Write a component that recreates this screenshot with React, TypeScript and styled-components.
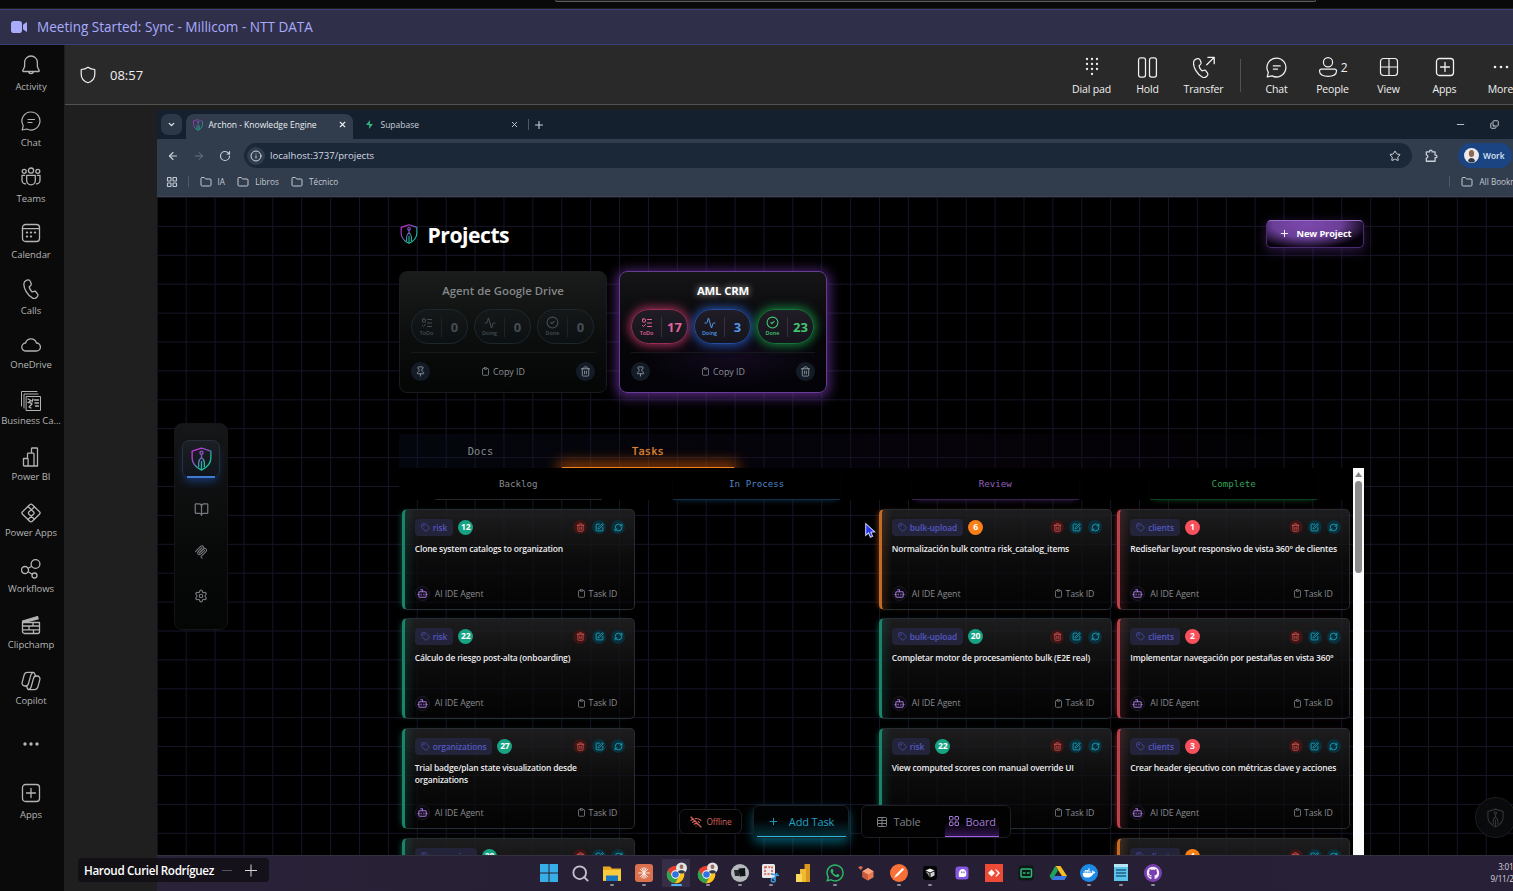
import React from "react";
import styled, { createGlobalStyle, css } from "styled-components";
import {
  Activity, ArrowLeft, ArrowRight, BookOpen, Bot, ChevronDown, CircleCheck, Clipboard, Copy,
  Folder, Info, LayoutGrid, ListTodo, Minus, Pin, Plus, RefreshCw, RotateCw,
  Search, Settings, SquarePen, Star, Table, Tag, Trash2, WifiOff, X,
} from "lucide-react";
import { FaDocker, FaGithub, FaWhatsapp } from "react-icons/fa";

const GlobalStyle = createGlobalStyle`
  * { box-sizing: border-box; }
  html, body { margin: 0; padding: 0; background: #0a0a0a; overflow: hidden; }
  body { font-family: "Open Sans", "Noto Sans", sans-serif; color: #fff; }
  svg { display: block; flex: none; }
`;

/* ---------- shell ---------- */
const Shell = styled.div`
  width: 1513px;
  height: 891px;
  overflow: hidden;
  display: flex;
  flex-direction: column;
  background: #0a0a0a;
`;
const TopStrip = styled.div`
  height: 9px;
  flex: none;
  background: #090909;
  border-bottom: 1px solid #1f1f1f;
`;
const SearchEdge = styled.div`
  width: 761px;
  height: 2px;
  margin-left: 555px;
  border: 1px solid #5c5c5c;
  border-top: 0;
  border-radius: 0 0 4px 4px;
  background: #1c1c1c;
`;
const Banner = styled.div`
  height: 36px;
  flex: none;
  display: flex;
  align-items: center;
  gap: 10px;
  padding-left: 11px;
  background: #2f2f4a;
  border: solid #3d3e78;
  border-width: 1px 0;
  color: #a9acfa;
  font-size: 13.55px;
`;
const Body = styled.div`
  flex: 1;
  min-height: 0;
  display: flex;
`;

/* ---------- left rail ---------- */
const Rail = styled.nav`
  width: 64px;
  flex: none;
  background: #0a0a0a;
  display: flex;
  flex-direction: column;
`;
const RailItem = styled.div<{ $tight?: boolean; $drop?: number }>`
  width: 62px;
  height: 56px;
  flex: none;
  padding-top: ${(p) => 10 + (p.$drop ?? 0)}px;
  display: flex;
  flex-direction: column;
  align-items: center;
  gap: ${(p) => (p.$tight ? 3 : 5)}px;
  color: #b4b4b4;
  font-size: 9.5px;
  line-height: 14px;
  letter-spacing: -0.05px;
  white-space: nowrap;
`;

/* ---------- meeting header ---------- */
const Main = styled.div`
  flex: 1;
  min-width: 0;
  display: flex;
  flex-direction: column;
  border-left: 1px solid #1f1f1f;
  background: #1f1f1f;
  overflow: hidden;
`;
const CallBar = styled.div`
  height: 60px;
  flex: none;
  display: flex;
  align-items: center;
  background: #292929;
  border-bottom: 1px solid #525252;
  padding-left: 14px;
`;
const Timer = styled.div`
  display: flex;
  align-items: center;
  gap: 13px;
  padding-top: 1px;
  font-size: 13px;
  color: #f0f0f0;
`;
const Tools = styled.div`
  display: flex;
  align-items: center;
  margin-left: auto;
  margin-right: -15.5px;
`;
const Tool = styled.div`
  width: 56px;
  padding-top: 4px;
  display: flex;
  flex-direction: column;
  align-items: center;
  gap: 4px;
  font-size: 10.5px;
  line-height: 15px;
  letter-spacing: -0.15px;
  color: #f0f0f0;
  white-space: nowrap;
`;
const ToolIcon = styled.div`
  height: 22px;
  display: flex;
  align-items: center;
  gap: 3px;
  font-size: 12px;
`;
const ToolDivider = styled.div`
  width: 1px;
  height: 33px;
  margin: 2px 8px 0;
  background: #525252;
`;

/* ---------- shared screen ---------- */
const Stage = styled.div`
  flex: 1;
  min-height: 0;
  padding: 5px 0 0 92px;
  position: relative;
`;
const Shared = styled.div`
  width: 1356px;
  height: 781px;
  overflow: hidden;
  display: flex;
  flex-direction: column;
`;
const TabStrip = styled.div`
  height: 29px;
  flex: none;
  display: flex;
  align-items: center;
  background: #15202f;
  padding: 0 14px 0 4px;
  font-size: 8.5px;
  color: #c7ced8;
`;
const TabMenu = styled.div`
  width: 21px;
  height: 21px;
  border-radius: 7px;
  background: #2c3848;
  display: grid;
  place-items: center;
`;
const BrowserTab = styled.div<{ $active?: boolean }>`
  width: ${(p) => (p.$active ? 167 : 172)}px;
  height: 25px;
  align-self: flex-end;
  display: flex;
  align-items: center;
  gap: 6px;
  padding: 0 6.5px 4px ${(p) => (p.$active ? 6.5 : 10.5)}px;
  margin-left: ${(p) => (p.$active ? 4 : 0)}px;
  border-radius: 8px 8px 0 0;
  white-space: nowrap;
  ${(p) => p.$active && css`
    background: #313c4c;
    color: #eceff3;
  `}
`;
const PushRight = styled.div<{ $gap?: number }>`
  margin-left: auto;
  display: flex;
  align-items: center;
  gap: ${(p) => p.$gap ?? 0}px;
`;
const Separator = styled.div<{ $h?: number; $mx?: number }>`
  width: 1px;
  height: ${(p) => p.$h ?? 11}px;
  margin: 0 ${(p) => p.$mx ?? 6}px;
  background: #4d5968;
`;
const NewTab = styled.div`
  margin-left: 1px;
`;
const AddressRow = styled.div`
  height: 33px;
  flex: none;
  display: flex;
  align-items: center;
  background: #313c4c;
  padding-left: 10px;
  color: #c9d0d9;
`;
const NavIcons = styled.div`
  width: 77px;
  display: flex;
  gap: 14px;
`;
const Omnibox = styled.div`
  width: 1168px;
  height: 25px;
  border-radius: 13px;
  background: #1b2838;
  display: flex;
  align-items: center;
  gap: 5px;
  padding: 0 11px 0 3px;
  font-size: 9.6px;
  color: #d5dae1;
`;
const InfoDot = styled.div`
  width: 18px;
  height: 18px;
  border-radius: 50%;
  background: #313c4c;
  display: grid;
  place-items: center;
`;
const ExtensionArea = styled.div`
  width: 46px;
  flex: none;
  padding-left: 12px;
  display: flex;
  align-items: center;
`;
const Profile = styled.div`
  height: 25px;
  width: 54px;
  flex: none;
  border-radius: 13px;
  background: #1b4582;
  display: flex;
  align-items: center;
  gap: 4px;
  padding-left: 6px;
  font-size: 8.4px;
  font-weight: 600;
  color: #dbe6f7;
`;
const Bookmarks = styled.div`
  height: 25px;
  flex: none;
  display: flex;
  align-items: center;
  background: #313c4c;
  border-bottom: 1px solid #3f4550;
  padding: 0 0 5px 8.5px;
  font-size: 8.2px;
  color: #c3cad3;
`;
const Bookmark = styled.div<{ $last?: boolean }>`
  display: flex;
  align-items: center;
  gap: 6px;
  margin-right: ${(p) => (p.$last ? -21 : 12.3)}px;
  white-space: nowrap;
`;

/* ---------- Archon page ---------- */
const Page = styled.div`
  height: 658px;
  flex: none;
  position: relative;
  overflow: hidden;
  padding: 0 149px 0 242px;
  background: #000;
`;
const GridLines = styled.svg`
  position: absolute;
  inset: 0;
`;
const Content = styled.div`
  position: relative;
  height: 658px;
  display: flex;
  flex-direction: column;
`;
const PageHead = styled.div`
  height: 74px;
  flex: none;
  display: flex;
  align-items: center;
  gap: 9.5px;
  padding-left: 1px;
`;
const PageTitle = styled.h1`
  margin: 2px 0 0;
  font-size: 21.2px;
  line-height: 28px;
  font-weight: 700;
  letter-spacing: -0.5px;
`;
const NewProject = styled.div`
  margin-left: auto;
  width: 98px;
  height: 28px;
  border-radius: 5px;
  border: 1px solid #4b2a72;
  border-top-color: #9a72c8;
  background: radial-gradient(ellipse 62px 25px at 40px 3px, #7c48ae 0, #6b3f98 55%, transparent 100%), #06020b;
  box-shadow: 0 3px 12px rgba(105, 55, 165, 0.45);
  display: flex;
  align-items: center;
  justify-content: center;
  gap: 6px;
  padding: 0 0 1px 1px;
  font-size: 9.25px;
  font-weight: 700;
  letter-spacing: -0.1px;
`;
const Projects = styled.div`
  height: 122px;
  flex: none;
  display: flex;
  gap: 12px;
`;
const ProjectCard = styled.div<{ $active?: boolean }>`
  width: 208px;
  height: 122px;
  border-radius: 8px;
  border: 1px solid ${(p) => (p.$active ? "#683b96" : "#191b1d")};
  background: ${(p) => p.$active
    ? "radial-gradient(ellipse 90px 30px at 55% 72%, rgba(70,30,115,.2), transparent), linear-gradient(#151517, #060608 55%, #030208)"
    : "linear-gradient(#1a1b1b, #0c0e0e 55%, #040606)"};
  box-shadow: ${(p) => (p.$active ? "0 2px 12px 3px rgba(112,56,168,.68)" : "none")};
  padding: 10px 11px 0;
  display: flex;
  flex-direction: column;
`;
const ProjectName = styled.div<{ $active?: boolean }>`
  height: 19px;
  text-align: center;
  font-size: 11.35px;
  line-height: 18px;
  font-weight: ${(p) => (p.$active ? 700 : 600)};
  letter-spacing: ${(p) => (p.$active ? -0.15 : 0)}px;
  color: ${(p) => (p.$active ? "#fff" : "#858889")};
  text-shadow: ${(p) => (p.$active ? "0 0 7px rgba(255,255,255,.7)" : "none")};
`;
const Pills = styled.div`
  margin-top: 8px;
  display: flex;
  gap: 6px;
`;
const Pill = styled.div<{ $tone: string; $glow?: string }>`
  width: 57px;
  height: 35px;
  border-radius: 18px;
  border: 1px solid ${(p) => (p.$glow ? p.$glow : "#1d282c")};
  background: ${(p) => (p.$glow ? "linear-gradient(#211c25, #15141d)" : "linear-gradient(#151819, #0b1012)")};
  box-shadow: ${(p) => (p.$glow ? `0 0 10px 2px ${p.$glow}` : "none")};
  color: ${(p) => p.$tone};
  display: flex;
  align-items: center;
  padding-left: 5px;
`;
const PillKind = styled.div`
  width: 19px;
  display: flex;
  flex-direction: column;
  align-items: center;
  gap: 1px;
  font-size: 5.4px;
  line-height: 7px;
  font-weight: 600;
`;
const PillCount = styled.div<{ $edge: string }>`
  margin-left: 5px;
  height: 20px;
  flex: 1;
  border-left: 1px solid ${(p) => p.$edge};
  text-align: center;
  font-size: 13px;
  line-height: 20px;
  font-weight: 700;
`;
const CardFoot = styled.div`
  margin-top: 8px;
  border-top: 1px solid #15191b;
  padding-top: 9px;
  display: flex;
  align-items: center;
  justify-content: space-between;
  font-size: 8.9px;
  color: #8d9195;
`;
const RoundButton = styled.div`
  width: 19px;
  height: 19px;
  border-radius: 50%;
  background: #131c26;
  display: grid;
  place-items: center;
  color: #8b939c;
`;
const Inline = styled.div<{ $gap?: number }>`
  display: flex;
  align-items: center;
  gap: ${(p) => p.$gap ?? 3}px;
  white-space: nowrap;
`;

const Tabs = styled.div`
  margin-top: 41px;
  height: 34px;
  flex: none;
  display: flex;
  font-family: "DejaVu Sans Mono", monospace;
  font-size: 10.3px;
  letter-spacing: 0.2px;
  background: linear-gradient(90deg, rgba(10,20,40,.3), rgba(20,8,30,.3) 60%, transparent);
`;
const TabLabel = styled.div<{ $active?: boolean }>`
  width: ${(p) => (p.$active ? 172 : 163)}px;
  position: relative;
  text-align: center;
  line-height: 34px;
  color: ${(p) => (p.$active ? "#d98536" : "#85898d")};
  text-shadow: ${(p) => (p.$active ? "0 0 1px rgba(217,133,54,.8)" : "none")};
  ${(p) => p.$active && css`
    &::after {
      content: "";
      position: absolute;
      left: 0;
      right: 0;
      bottom: 0;
      height: 1.5px;
      background: #f7831c;
      box-shadow: 0 0 14px 4px rgba(225,95,5,.8);
    }
  `}
`;
const Board = styled.div`
  position: relative;
  height: 387px;
  display: flex;
  background: linear-gradient(#000 32px, transparent 32px);
`;
const Column = styled.div`
  width: 238.5px;
  flex: none;
  display: flex;
  flex-direction: column;
  align-items: center;
`;
const ColumnHead = styled.div<{ $tone: string; $line: string; $dim?: boolean }>`
  width: 167px;
  height: 32px;
  flex: none;
  text-align: center;
  font-family: "DejaVu Sans Mono", monospace;
  font-size: 9.2px;
  line-height: 31px;
  color: ${(p) => p.$tone};
  border-bottom: 1px solid ${(p) => p.$line};
  box-shadow: 0 4px 6px -4px ${(p) => (p.$dim ? "transparent" : p.$line)};
`;
const Cards = styled.div`
  margin-top: 8.6px;
  display: flex;
  flex-direction: column;
  gap: 8.7px;
`;
const TaskCard = styled.div<{ $accent: string }>`
  width: 233px;
  height: 101px;
  flex: none;
  border: 1px solid #272b33;
  border-left: 3px solid ${(p) => p.$accent};
  border-radius: 5px;
  background: linear-gradient(90deg, ${(p) => p.$accent}30, transparent 10px), linear-gradient(rgba(34,34,36,.85), rgba(15,15,16,.75) 50%, rgba(5,5,6,.6));
  box-shadow: -4px 0 6px -4px ${(p) => p.$accent}b0;
  padding: 8px 8.5px 0 10px;
  display: flex;
  flex-direction: column;
`;
const TaskTop = styled.div`
  height: 19px;
  display: flex;
  align-items: center;
`;
const TagChip = styled.div`
  height: 17px;
  padding: 0 6px;
  border-radius: 4px;
  background: #232439;
  color: #5457c2;
  display: flex;
  align-items: center;
  gap: 3px;
  font-size: 8.4px;
  font-weight: 600;
  letter-spacing: -0.1px;
  white-space: nowrap;
`;
const Priority = styled.div<{ $tone: string }>`
  width: 15px;
  height: 15px;
  margin-left: 5px;
  border-radius: 50%;
  background: ${(p) => p.$tone};
  text-align: center;
  font-size: 8.6px;
  line-height: 15px;
  font-weight: 700;
  letter-spacing: -0.2px;
`;
const Actions = styled.div`
  margin-left: auto;
  display: flex;
  gap: 5px;
`;
const ActionDot = styled.div<{ $tone: string; $bg: string }>`
  width: 14px;
  height: 14px;
  border-radius: 50%;
  display: grid;
  place-items: center;
  color: ${(p) => p.$tone};
  background: ${(p) => p.$bg};
`;
const TaskTitle = styled.div`
  margin: 6px -8px 0 0;
  font-size: 8.5px;
  line-height: 11.7px;
  font-weight: 650;
  letter-spacing: -0.19px;
  color: #ececee;
  white-space: pre;
`;
const TaskFoot = styled.div`
  margin-top: auto;
  height: 30px;
  padding: 0 8px 0 0;
  display: flex;
  justify-content: space-between;
  align-items: center;
  font-size: 8.75px;
  letter-spacing: -0.1px;
  color: #888b8f;
`;
const BotDot = styled.div`
  width: 15px;
  height: 15px;
  border-radius: 50%;
  border: 1px solid #1d1a24;
  background: #0b0910;
  display: grid;
  place-items: center;
  color: #a274d6;
`;
const Scrollbar = styled.div`
  width: 11px;
  height: 387px;
  background: #fbfbfb;
  display: flex;
  flex-direction: column;
  align-items: center;
  padding-top: 4px;
  gap: 4px;
`;
const Thumb = styled.div`
  width: 7px;
  height: 92px;
  border-radius: 4px;
  background: #8b8b8b;
`;

/* floating layers over the page */
const SideNav = styled.div`
  position: absolute;
  left: 17px;
  top: 226px;
  width: 54px;
  height: 207px;
  border-radius: 8px;
  border: 1px solid #131516;
  background: linear-gradient(#161718, #080a0a 60%, #040505);
  padding-top: 16px;
  display: flex;
  flex-direction: column;
  align-items: center;
  color: #75797d;
`;
const SideActive = styled.div`
  position: relative;
  width: 38px;
  height: 38px;
  border-radius: 7px;
  border: 1px solid #26313e;
  background: linear-gradient(#1c1f23, #10151d);
  box-shadow: 0 6px 10px -3px rgba(30,85,190,.6);
  display: grid;
  place-items: center;
  &::after {
    content: "";
    position: absolute;
    left: 4px;
    right: 4px;
    bottom: -1px;
    height: 2px;
    background: #3f7bd0;
  }
`;
const SideLink = styled.div<{ $mt: number }>`
  margin-top: ${(p) => p.$mt}px;
`;
const Dock = styled.div`
  position: absolute;
  left: 522px;
  top: 608px;
  height: 33px;
  display: flex;
  align-items: center;
`;
const DockChip = styled.div<{ $w: number; $h: number; $ml?: number; $tone: string; $size?: number; $gap?: number }>`
  width: ${(p) => p.$w}px;
  height: ${(p) => p.$h}px;
  margin-left: ${(p) => p.$ml ?? 0}px;
  border: 1px solid #1c1f23;
  border-radius: 6px;
  background: #020203;
  color: ${(p) => p.$tone};
  font-size: ${(p) => p.$size ?? 11}px;
  letter-spacing: -0.15px;
  display: flex;
  align-items: center;
  justify-content: center;
  gap: ${(p) => p.$gap ?? 10}px;
  white-space: nowrap;
`;
const AddChip = styled(DockChip)`
  position: relative;
  background: linear-gradient(#020304 45%, #04303a);
  box-shadow: 0 5px 11px 0 rgba(6,140,170,.6);
  &::after {
    content: "";
    position: absolute;
    left: 3px;
    right: 2px;
    bottom: 0;
    height: 1.5px;
    background: #2ab9dc;
  }
`;
const ViewSwitch = styled(DockChip)`
  justify-content: flex-start;
`;
const ViewOption = styled.div<{ $active?: boolean }>`
  height: 31px;
  padding: 0 3px 0 ${(p) => (p.$active ? 3 : 13.5)}px;
  margin-right: ${(p) => (p.$active ? 0 : 21)}px;
  display: flex;
  align-items: center;
  gap: 6px;
  color: ${(p) => (p.$active ? "#a67ad8" : "#7d8186")};
  ${(p) => p.$active && css`
    border-bottom: 1.5px solid #a45ee8;
    background: linear-gradient(transparent 55%, rgba(110,45,175,.45));
  `}
`;
const HelpOrb = styled.div`
  position: absolute;
  left: 1318px;
  top: 600px;
  width: 41px;
  height: 41px;
  border-radius: 50%;
  border: 1px solid #202326;
  background: #0b0c0d;
  display: grid;
  place-items: center;
  opacity: 0.85;
`;
const Pointer = styled.svg`
  position: absolute;
  left: 707px;
  top: 325px;
`;

/* ---------- Windows taskbar ---------- */
const Taskbar = styled.div`
  height: 36px;
  flex: none;
  background: linear-gradient(90deg, #292238, #261f33 50%, #272037);
  border-top: 1px solid #35303f;
  display: flex;
  padding-left: 376px;
`;
const TaskApp = styled.div<{ $active?: boolean; $dot?: boolean }>`
  width: 31.8px;
  height: 35px;
  display: flex;
  flex-direction: column;
  align-items: center;
  padding-top: 7px;
  &::after {
    content: "";
    margin-top: 1px;
    width: ${(p) => (p.$active ? 11 : 4)}px;
    height: 2px;
    border-radius: 1px;
    background: ${(p) => (p.$active ? "#4fb3f0" : p.$dot ? "#8f8a98" : "transparent")};
  }
  ${(p) => p.$active && css`
    background: linear-gradient(#352e46, #352e46) center 3px / 28px 28px no-repeat;
  `}
`;
const AppIcon = styled.div`
  height: 20px;
  display: flex;
  align-items: center;
`;
const Clock = styled.div`
  margin: 5px -14px 0 auto;
  text-align: right;
  font-size: 8.1px;
  letter-spacing: -0.2px;
  line-height: 11.5px;
  color: #d6d3dc;
  white-space: nowrap;
`;
const NameTag = styled.div`
  position: absolute;
  left: 13px;
  top: 753px;
  width: 191px;
  height: 24px;
  border-radius: 4px;
  background: rgba(16, 14, 20, 0.82);
  display: flex;
  align-items: center;
  padding-left: 6px;
  font-size: 11.7px;
  font-weight: 600;
  letter-spacing: -0.35px;
  white-space: nowrap;
`;

/* ---------- drawings ---------- */
type GlyphProps = { size?: number; w?: number; box?: number; children: React.ReactNode };
const Glyph = ({ size = 20, w = 1.3, box = 20, children }: GlyphProps) => (
  <svg width={size} height={size} viewBox={`0 0 ${box} ${box}`} fill="none" stroke="currentColor" strokeWidth={w} strokeLinecap="round" strokeLinejoin="round">
    {children}
  </svg>
);
const ChatGlyph = ({ size = 22 }: { size?: number }) => (
  <Glyph size={size} w={1.2}>
    <path d="M10 1a9 9 0 1 1-4.2 17L1.2 19l1-4.4A9 9 0 0 1 10 1Z" />
    <path d="M7 8.500h6.500M7 11.500h4" />
  </Glyph>
);
const BellGlyph = () => (
  <Glyph><path d="M10 1a6.400 6.400 0 0 0-6.400 6.400v4.300L1.800 15.500a.7.700 0 0 0 .6 1h15.200a.7.700 0 0 0 .6-1l-1.800-3.800V7.400A6.400 6.400 0 0 0 10 1ZM7.500 16.700a2.600 2.600 0 0 0 5 0" /></Glyph>
);
const TeamsGlyph = () => (
  <Glyph>
    <circle cx="10" cy="3.600" r="2.600" /><circle cx="3.200" cy="4.300" r="2" /><circle cx="16.800" cy="4.300" r="2" />
    <path d="M5.700 8.400h8.600v5.200a4.300 4.300 0 0 1-8.600 0ZM3.600 8.400H1v4.800a3.600 3.600 0 0 0 3.600 3.600M16.400 8.400H19v4.800a3.600 3.600 0 0 1-3.600 3.600" />
  </Glyph>
);
const CalendarGlyph = () => (
  <Glyph>
    <rect x="1.500" y="1.500" width="17" height="17" rx="3" /><path d="M1.500 5.700h17" />
    <path d="M9.900 9.500h.2M13.900 9.500h.2M5.900 9.500h.2M5.900 13.500h.2M9.900 13.500h.2" strokeWidth="2.200" />
  </Glyph>
);
const PhonePath = "M5.300 1.400 6.600 1c1.200-.3 2.300.3 2.700 1.400l.8 1.900c.3.9.1 1.900-.6 2.500L8.200 8c.4 1.700 1.600 3.700 2.900 4.900l1.700-.5c.9-.3 1.900 0 2.400.8l1.200 1.600c.7 1 .5 2.300-.3 3.100l-.9.800c-1 .9-2.300 1.100-3.500.5C6.500 16.500 2.500 9.300 2.900 4.700c.1-1.600 1-2.800 2.400-3.300Z";
const PhoneGlyph = () => <Glyph><path d={PhonePath} /></Glyph>;
const CloudGlyph = () => (
  <Glyph><path d="M5 16a4 4 0 0 1-.4-8A5.600 5.600 0 0 1 15.400 8 4 4 0 0 1 15.400 16Z" /></Glyph>
);
const BusinessGlyph = () => (
  <Glyph w={1}>
    <path d="M.5 15V.5H16M3 17V3h14M5.500 5.500h14v14h-14Z" strokeLinejoin="miter" />
    <path d="M13.500 9h4M14 12h3.500M14.500 15h3M7 8l3 1.500L8 11l3 2-3 3 2 1M7 11.500h2M12 8l-1 3" strokeWidth="1.300" />
  </Glyph>
);
const PowerBiGlyph = () => (
  <Glyph><path d="M13.500 19h3V1.800a.8.800 0 0 0-.8-.8h-4.400a.8.800 0 0 0-.8.800V6M2.500 11.500h3.800a.8.800 0 0 1 .8.800V19H3.300a.8.800 0 0 1-.8-.8ZM6.500 11V7a.8.800 0 0 1 .8-.8h4.900a.8.800 0 0 1 .8.800v12H7" /></Glyph>
);
const PowerAppsGlyph = () => (
  <Glyph>
    <path d="M8.700 1.700a1.800 1.800 0 0 1 2.600 0l7.200 7.100a1.700 1.700 0 0 1 0 2.400l-7.200 7.100a1.800 1.800 0 0 1-2.600 0L1.500 11.200a1.700 1.700 0 0 1 0-2.400Z" />
    <path d="m7 3.500 5.500 5.300a1.700 1.700 0 0 1 0 2.400L7 16.500M13.500 4 8 8.800a1.700 1.700 0 0 0 0 2.400l5.500 5" />
  </Glyph>
);
const WorkflowGlyph = () => (
  <Glyph><circle cx="14.500" cy="5" r="4.400" /><circle cx="4" cy="11" r="3.500" /><circle cx="13.500" cy="16.500" r="2.500" /><path d="m7.200 9.200 3.500-2M7.200 12.800l4 2.500" /></Glyph>
);
const ClipGlyph = () => (
  <Glyph>
    <path d="M1.500 6 16.500 1.500l.6 2.300L2 7.500Z" fill="currentColor" />
    <path d="M1.500 7.500h17v9a2 2 0 0 1-2 2h-13a2 2 0 0 1-2-2ZM1.500 11h17M1.500 14.800h17M12 7.500V11M8 11v3.800M12.500 14.800v3.700" />
  </Glyph>
);
const CopilotGlyph = () => (
  <Glyph>
    <path d="M6.500 1.300h5.300c1 0 1.800.7 2 1.600l.5 2.100M14.500 5h1.800c1.700 0 3 1.700 2.600 3.400l-2 7.500a3.500 3.500 0 0 1-3.300 2.700H8.200c-1 0-1.800-.7-2-1.600L5.700 15H3.700c-1.700 0-3-1.700-2.600-3.400l2-7.500A3.500 3.500 0 0 1 6.500 1.300" />
    <path d="M12.500 1.300c-1.500.2-2.200 1.200-2.600 2.600l-2.300 8.300C7.200 14 6.800 15 5 15M7.500 18.600c1.500-.2 2.200-1.200 2.600-2.600l2.300-8.300C12.800 6 13.200 5 15 5" />
  </Glyph>
);
const DotsGlyph = ({ r = 1.7 }: { r?: number }) => (
  <Glyph><g fill="currentColor" stroke="none"><circle cx="4" cy="10" r={r} /><circle cx="10" cy="10" r={r} /><circle cx="16" cy="10" r={r} /></g></Glyph>
);
const PlusBoxGlyph = () => (
  <Glyph><rect x="1.500" y="1.500" width="17" height="17" rx="3" /><path d="M10 5.500v9M5.500 10h9" /></Glyph>
);
const DialGlyph = () => (
  <Glyph size={22} box={22}>
    <g fill="currentColor" stroke="none">
      {[6, 11, 16].flatMap((x) => [3, 8, 13].map((y) => <circle key={`${x}-${y}`} cx={x} cy={y} r="1.150" />))}
      <circle cx="11" cy="18" r="1.150" />
    </g>
  </Glyph>
);
const ExtensionGlyph = () => (
  <Glyph size={14} box={24} w={2.2}>
    <path d="M4 5h5.500V4a2.200 2.200 0 0 1 4.400 0v1H19v5.500h1a2.200 2.200 0 0 1 0 4.400h-1V21H4v-5.200c3.500-.3 3.500-5.300 0-5.600Z" />
  </Glyph>
);
const McpGlyph = () => (
  <Glyph size={14} box={180} w={13}>
    <path d="M18 84.850 85.880 16.970c9.370-9.370 24.570-9.370 33.940 0s9.370 24.570 0 33.940l-51.260 51.270" />
    <path d="m69.270 101.470 50.550-50.560c9.380-9.370 24.570-9.370 33.950 0l.35.350c9.370 9.380 9.370 24.580 0 33.950l-61.400 61.390c-3.120 3.120-3.120 8.190 0 11.310l12.610 12.610" />
    <path d="m102.850 33.940-50.200 50.210c-9.380 9.370-9.380 24.560 0 33.940 9.370 9.370 24.570 9.370 33.940 0l50.200-50.210" />
  </Glyph>
);
const ArchonMark = ({ w, h, id, dim }: { w: number; h: number; id: string; dim?: boolean }) => (
  <svg width={w} height={h} viewBox="0 0 22 25" fill="none" stroke={dim ? "#3c4145" : `url(#${id})`} strokeWidth="1.400" strokeLinecap="round" strokeLinejoin="round">
    <defs>
      <linearGradient id={id} gradientUnits="userSpaceOnUse" x1="1" y1="1" x2="21" y2="22">
        <stop offset="0.150" stopColor="#c238d8" />
        <stop offset="0.450" stopColor="#7a58c0" />
        <stop offset="0.700" stopColor="#1fb99b" />
      </linearGradient>
    </defs>
    <path d="M11 1 20.800 4.200v7.300c0 6-4.300 10-9.800 12.700C5.500 21.500 1.200 17.500 1.200 11.500V4.200Z" />
    <circle cx="11" cy="6" r="1.600" />
    <path d="M11 7.800v2.700M8 20.500v-4.200c0-1.800.8-3.500 3-5.300 2.200 1.800 3 3.500 3 5.300v4.200M11 15v8" />
  </svg>
);
const ChromeMark = () => (
  <svg width="23" height="23" viewBox="0 0 23 23">
    <circle cx="10.500" cy="12.500" r="8.700" fill="#e8402f" />
    <path d="M2.900 8.200a8.700 8.700 0 0 0 7 13l4-6.700-6.800-.5Z" fill="#2ea44c" />
    <path d="M10 21.200a8.700 8.700 0 0 0 8.100-12.900h-8l4.200 5.900Z" fill="#fbc719" />
    <circle cx="10.500" cy="12.500" r="4.200" fill="#fff" /><circle cx="10.500" cy="12.500" r="3.300" fill="#2f72e4" />
    <circle cx="16.500" cy="6" r="5.500" fill="#e4e4e4" />
    <ellipse cx="16.500" cy="4.800" rx="1.900" ry="2.300" fill="#96705c" /><path d="M13 10c.5-2.500 6.500-2.500 7 0-1.500 2-5.500 2-7 0Z" fill="#333b48" />
  </svg>
);
const Square = ({ children }: { children: React.ReactNode }) => (
  <svg width="20" height="20" viewBox="0 0 20 20">{children}</svg>
);

/* ---------- data ---------- */
const railItems: { label: string; icon: React.ReactNode; tight?: boolean; drop?: number }[] = [
  { label: "Activity", icon: <BellGlyph /> },
  { label: "Chat", icon: <ChatGlyph size={20} /> },
  { label: "Teams", icon: <TeamsGlyph /> },
  { label: "Calendar", icon: <CalendarGlyph /> },
  { label: "Calls", icon: <PhoneGlyph /> },
  { label: "OneDrive", icon: <CloudGlyph />, tight: true },
  { label: "Business Ca...", icon: <BusinessGlyph />, tight: true },
  { label: "Power BI", icon: <PowerBiGlyph />, tight: true },
  { label: "Power Apps", icon: <PowerAppsGlyph />, tight: true },
  { label: "Workflows", icon: <WorkflowGlyph />, tight: true },
  { label: "Clipchamp", icon: <ClipGlyph />, tight: true },
  { label: "Copilot", icon: <CopilotGlyph />, tight: true },
  { label: "", icon: <DotsGlyph />, drop: 7 },
  { label: "Apps", icon: <PlusBoxGlyph /> },
];

type Task = { tag: string; n: number; tone: string; title: string };
const GREEN = "#17a283";
const ORANGE = "#fb7f17";
const RED = "#f8505c";
const accents: Record<string, string> = { [GREEN]: "#17846b", [ORANGE]: "#c46a22", [RED]: "#b8434b" };
const columns: { name: string; tone: string; line: string; dim?: boolean; tasks: Task[] }[] = [
  {
    name: "Backlog", tone: "#868a8e", line: "#24272a", dim: true,
    tasks: [
      { tag: "risk", n: 12, tone: GREEN, title: "Clone system catalogs to organization" },
      { tag: "risk", n: 22, tone: GREEN, title: "Cálculo de riesgo post-alta (onboarding)" },
      { tag: "organizations", n: 27, tone: GREEN, title: "Trial badge/plan state visualization desde\norganizations" },
      { tag: "screening", n: 28, tone: GREEN, title: "" },
    ],
  },
  { name: "In Process", tone: "#4e83c4", line: "#10304c", tasks: [] },
  {
    name: "Review", tone: "#8f60bd", line: "#372050",
    tasks: [
      { tag: "bulk-upload", n: 6, tone: ORANGE, title: "Normalización bulk contra risk_catalog_items" },
      { tag: "bulk-upload", n: 20, tone: GREEN, title: "Completar motor de procesamiento bulk (E2E real)" },
      { tag: "risk", n: 22, tone: GREEN, title: "View computed scores con manual override UI" },
    ],
  },
  {
    name: "Complete", tone: "#36a35c", line: "#0c4021",
    tasks: [
      { tag: "clients", n: 1, tone: RED, title: "Rediseñar layout responsivo de vista 360° de clientes" },
      { tag: "clients", n: 2, tone: RED, title: "Implementar navegación por pestañas en vista 360°" },
      { tag: "clients", n: 3, tone: RED, title: "Crear header ejecutivo con métricas clave y acciones" },
      { tag: "clients", n: 4, tone: ORANGE, title: "" },
    ],
  },
];

const TaskItem = ({ task }: { task: Task }) => (
  <TaskCard $accent={accents[task.tone]}>
    <TaskTop>
      <TagChip><Tag size={9} strokeWidth={1.8} />{task.tag}</TagChip>
      <Priority $tone={task.tone}>{task.n}</Priority>
      <Actions>
        <ActionDot $tone="#cf5350" $bg="#3c1615"><Trash2 size={9} strokeWidth={2.3} /></ActionDot>
        <ActionDot $tone="#1fa5bf" $bg="#0a2f3a"><SquarePen size={9} strokeWidth={2.3} /></ActionDot>
        <ActionDot $tone="#1fa5bf" $bg="#0a2f3a"><RefreshCw size={9} strokeWidth={2.3} /></ActionDot>
      </Actions>
    </TaskTop>
    <TaskTitle>{task.title}</TaskTitle>
    <TaskFoot>
      <Inline $gap={5}><BotDot><Bot size={11} strokeWidth={2.3} /></BotDot>AI IDE Agent</Inline>
      <Inline $gap={2}><Clipboard size={9} strokeWidth={2} />Task ID</Inline>
    </TaskFoot>
  </TaskCard>
);

type Stat = { label: string; n: number; icon: React.ReactNode; tone: string; glow: string };
const Project = ({ name, active, counts }: { name: string; active?: boolean; counts: number[] }) => {
  const stats: Stat[] = [
    { label: "ToDo", n: counts[0], icon: <ListTodo size={12} />, tone: "#e0659a", glow: "#9a2f55" },
    { label: "Doing", n: counts[1], icon: <Activity size={12} />, tone: "#4f97ea", glow: "#234da0" },
    { label: "Done", n: counts[2], icon: <CircleCheck size={13} />, tone: "#43c673", glow: "#15783a" },
  ];
  return (
    <ProjectCard $active={active}>
      <ProjectName $active={active}>{name}</ProjectName>
      <Pills>
        {stats.map((s) => (
          <Pill key={s.label} $tone={active ? s.tone : "#454d53"} $glow={active ? s.glow : undefined}>
            <PillKind>{s.icon}{s.label}</PillKind>
            <PillCount $edge={active ? "#3a2f3c" : "#1d2428"}>{s.n}</PillCount>
          </Pill>
        ))}
      </Pills>
      <CardFoot>
        <RoundButton><Pin size={11} /></RoundButton>
        <Inline $gap={3}><Clipboard size={9} />Copy ID</Inline>
        <RoundButton><Trash2 size={11} /></RoundButton>
      </CardFoot>
    </ProjectCard>
  );
};

const gridX = Array.from({ length: 47 }, (_, i) => 0.3 + i * 28.89);
const gridY = Array.from({ length: 23 }, (_, i) => 0.5 + i * 28.9);

const taskApps: { icon: React.ReactNode; dot?: boolean; active?: boolean }[] = [
  { icon: <Square><path d="M1 1h8.500v8.500H1ZM10.500 1H19v8.500h-8.500ZM1 10.500h8.500V19H1ZM10.500 10.500H19V19h-8.500Z" fill="#38aee9" /></Square> },
  { icon: <Search size={19} strokeWidth={2.3} color="#c6c1ce" /> },
  { icon: <Square><path d="M1 3.500h7l2 2h9V18H1Z" fill="#e9a821" /><path d="M1 7h18v10.500H1Z" fill="#fccb3d" /><path d="M4 12.500h12V18H4Z" fill="#1777c2" /></Square>, dot: true },
  { icon: <Square><rect x="1" y="1" width="18" height="18" rx="3" fill="#d9714f" /><path d="M10 4v12M4 10h12M5.800 5.800l8.400 8.400M14.200 5.800l-8.400 8.400M7.800 4.700l4.400 10.600M12.200 4.700l-4.400 10.600" stroke="#fff1ea" strokeWidth=".9" /></Square>, dot: true },
  { icon: <ChromeMark />, active: true },
  { icon: <ChromeMark />, dot: true },
  { icon: <Square><circle cx="10" cy="10" r="9" fill="#b4b9bc" /><path d="M4 7h5v6H5Z" fill="#24282b" /><path d="M8.500 5.500 15 5l.5 8-6 .5Z" fill="#111416" /></Square>, dot: true },
  { icon: <Square><rect x="1" y="1" width="13" height="14" rx="1.500" fill="#e7e9ea" /><path d="M4 4h7v7H4Z" fill="none" stroke="#e34c38" strokeWidth="1.500" strokeDasharray="2 1.300" /><path d="m10 11 8 1.500M13 17l3-7" stroke="#3c9fe0" strokeWidth="1.600" /><circle cx="12.300" cy="17" r="2" fill="none" stroke="#3c9fe0" strokeWidth="1.300" /></Square>, dot: true },
  { icon: <Square><path d="M11.500 1H17v18h-5.500Z" fill="#d9971d" /><path d="M7 6h6v13H7Z" fill="#f0bb31" /><path d="M3 11h6v8H3Z" fill="#fbd95c" /></Square> },
  { icon: <FaWhatsapp size={20} color="#2cb964" />, dot: true },
  { icon: <Square><path d="m11 5 5.500 3.200v6L11 17.500l-5.500-3.300v-6Z" fill="#e87a54" /><path d="m11 5 5.500 3.200L11 11.500 5.500 8.200Z" fill="#f7a581" /><path d="M11 11.500v6l-5.500-3.300v-6Z" fill="#c95a3c" /><path d="m1 4.500 2.500-1.500 2.500 1-2 3Z" fill="#d96b4b" /></Square> },
  { icon: <Square><circle cx="10" cy="10" r="9" fill="#fa7138" /><path d="m5 15 2-3.500 6-6c1-1 2.500.5 1.500 1.500l-6 6Z" fill="#fff" /></Square>, dot: true },
  { icon: <Square><rect x="3" y="3" width="14" height="14" rx="3" fill="#040404" /><path d="m5.500 7.500 4.500-2 4.500 2-4.500 2Z" fill="#f0f0f0" /><path d="m5.500 8.500 4 1.500v4.500l-1.500-3Z" fill="#9a9a9a" /><path d="M14.500 8.500v4l-4 2V10Z" fill="#d0d0d0" /></Square>, dot: true },
  { icon: <Square><rect x="3.500" y="3.500" width="13" height="13" rx="3" fill="#8558df" /><path d="M7 14c-1-4 .5-8 3.500-8s4.500 3 3.500 7l-2 1Z" fill="#fff" /><path d="M9.800 8.500v1.700M12 8.500v1.700" stroke="#5a3aa5" /></Square> },
  { icon: <Square><path d="M1 1h18v18H1Z" fill="#ee4b37" /><path d="m7.500 6.500 3.500 3.500-3.500 3.500L4 10Z" fill="#fff" /><path d="M11 6.500h1.500L16 10l-3.500 3.500H11L14 10Z" fill="#fff" /></Square> },
  { icon: <Square><rect x="2.500" y="2.500" width="15" height="15" rx="2.500" fill="#0c1a16" /><rect x="5" y="6" width="10.500" height="8" rx="1" fill="none" stroke="#31b87b" strokeWidth="1.500" /><path d="M7 10h2.500M11 10h2.500" stroke="#31b87b" strokeWidth="1.500" /></Square> },
  { icon: <Square><path d="M7.500 3h5L19 13h-5Z" fill="#f9bd25" /><path d="M7.300 3 1.500 13 4 17l6-9.700Z" fill="#1fa35b" /><path d="M6 13h13l-2.500 4H4Z" fill="#3c79e6" /></Square> },
  { icon: <Square><circle cx="10" cy="10" r="9" fill="#1c8be6" /><g transform="translate(3.500 3.500)"><FaDocker size={13} color="#fff" /></g></Square>, dot: true },
  { icon: <Square><path d="M3 2h14v16H3Z" fill="#5cc4ea" /><path d="M3 1h14v3H3Z" fill="#b6e4f5" /><path d="M5 7h10M5 10h10M5 13h10" stroke="#1c5f86" strokeWidth="1.300" /></Square>, dot: true },
  { icon: <Square><circle cx="10" cy="10" r="9" fill="#7a3fae" /><g transform="translate(3.500 3.500)"><FaGithub size={13} color="#f3ecfa" /></g></Square>, dot: true },
];

export default function App() {
  return (
    <Shell>
      <GlobalStyle />
      <TopStrip><SearchEdge /></TopStrip>
      <Banner>
        <svg width="16" height="12" viewBox="0 0 16 12" fill="#a9acfa"><rect width="11" height="12" rx="2.800" /><path d="M12 3.800 15 1.500c.6-.4 1.200 0 1.200.6v7.800c0 .6-.6 1-1.200.6l-3-2.300Z" /></svg>
        Meeting Started: Sync - Millicom - NTT DATA
      </Banner>
      <Body>
        <Rail>
          {railItems.map((r, i) => (
            <RailItem key={i} $tight={r.tight} $drop={r.drop}>{r.icon}{r.label}</RailItem>
          ))}
        </Rail>
        <Main>
          <CallBar>
            <Timer>
              <svg width="18" height="18" viewBox="0 0 18 18" fill="none" stroke="#f0f0f0" strokeWidth="1.200" strokeLinejoin="round"><path d="M9 1.200c2 1.500 4.300 2.200 6.800 2.300v4.700c0 4.200-2.400 7-6.800 8.600-4.400-1.600-6.800-4.400-6.800-8.600V3.500C4.700 3.400 7 2.700 9 1.200Z" /></svg>
              08:57
            </Timer>
            <Tools>
              <Tool><ToolIcon><DialGlyph /></ToolIcon>Dial pad</Tool>
              <Tool><ToolIcon><Glyph size={21} w={1.2}><rect x="1.500" y=".8" width="6.600" height="18.400" rx="2" /><rect x="11.900" y=".8" width="6.600" height="18.400" rx="2" /></Glyph></ToolIcon>Hold</Tool>
              <Tool><ToolIcon><Glyph size={22} w={1.2}><path transform="translate(-2.200 1.500) scale(.93)" d={PhonePath} /><path d="M12.500 8 19 1.500M13.500 1.200H19.300V7" /></Glyph></ToolIcon>Transfer</Tool>
              <ToolDivider />
              <Tool><ToolIcon><ChatGlyph size={21} /></ToolIcon>Chat</Tool>
              <Tool><ToolIcon><Glyph size={20} w={1.2}><circle cx="10" cy="5.200" r="4.600" /><path d="M3.400 12.200h13.200c1 0 1.900.8 1.900 1.900 0 3.400-3.400 5.300-8.500 5.300s-8.500-1.900-8.500-5.300c0-1.100.9-1.900 1.900-1.900Z" /></Glyph>2</ToolIcon>People</Tool>
              <Tool><ToolIcon><Glyph size={20} w={1.2}><rect x="1.500" y="1.500" width="17" height="17" rx="3" /><path d="M10 1.500v17M1.500 10h17" /></Glyph></ToolIcon>View</Tool>
              <Tool><ToolIcon><PlusBoxGlyph /></ToolIcon>Apps</Tool>
              <Tool><ToolIcon><DotsGlyph r={1.3} /></ToolIcon>More</Tool>
            </Tools>
          </CallBar>
          <Stage>
            <Shared>
              <TabStrip>
                <TabMenu><ChevronDown size={9} strokeWidth={3.5} color="#e6e9ee" /></TabMenu>
                <BrowserTab $active>
                  <ArchonMark w={10} h={12} id="favicon" />
                  Archon - Knowledge Engine
                  <PushRight><X size={9} strokeWidth={3} /></PushRight>
                </BrowserTab>
                <BrowserTab>
                  <svg width="11" height="11" viewBox="0 0 11 11"><path d="M6 1 2 6h3.200L5 10l4-5H5.800Z" fill="#35b57f" /></svg>
                  Supabase
                  <PushRight><X size={9} strokeWidth={2.5} /></PushRight>
                </BrowserTab>
                <Separator $mx={3} />
                <NewTab><Plus size={12} strokeWidth={2.2} /></NewTab>
                <PushRight $gap={24}>
                  <Minus size={11} />
                  <Copy size={9} strokeWidth={2.5} transform="scale(1 -1)" />
                </PushRight>
              </TabStrip>
              <AddressRow>
                <NavIcons>
                  <ArrowLeft size={12} strokeWidth={2.3} /><ArrowRight size={12} color="#6b7786" /><RotateCw size={12} strokeWidth={2.3} />
                </NavIcons>
                <Omnibox>
                  <InfoDot><Info size={12} /></InfoDot>
                  localhost:3737/projects
                  <PushRight><Star size={12} /></PushRight>
                </Omnibox>
                <ExtensionArea>
                  <ExtensionGlyph /><Separator $mx={11} $h={12} />
                </ExtensionArea>
                <Profile>
                  <svg width="15" height="15" viewBox="0 0 15 15"><circle cx="7.500" cy="7.500" r="7.500" fill="#eceaea" /><ellipse cx="7.500" cy="5.500" rx="2.600" ry="3.500" fill="#8d6650" /><path d="M4 13c.5-4 6.500-4 7 0-1.500 2-5.500 2-7 0Z" fill="#2f3a4a" /></svg>
                  Work
                </Profile>
              </AddressRow>
              <Bookmarks>
                <LayoutGrid size={12} strokeWidth={2.3} />
                <Separator $mx={10.5} />
                <Inline $gap={0}>
                  <Bookmark><Folder size={12} />IA</Bookmark>
                  <Bookmark><Folder size={12} />Libros</Bookmark>
                  <Bookmark><Folder size={12} />Técnico</Bookmark>
                </Inline>
                <PushRight>
                  <Separator $mx={11} />
                  <Bookmark $last><Folder size={12} />All Bookmarks</Bookmark>
                </PushRight>
              </Bookmarks>
              <Page>
                <GridLines width="1356" height="658" stroke="#181528" strokeWidth="1">
                  {gridX.map((x) => <path key={x} d={`M${x} 0V658`} />)}
                  {gridY.map((y) => <path key={y} d={`M0 ${y}H1356`} />)}
                </GridLines>
                <Content>
                  <PageHead>
                    <ArchonMark w={18} h={20} id="title-mark" />
                    <PageTitle>Projects</PageTitle>
                    <NewProject><Plus size={11} />New Project</NewProject>
                  </PageHead>
                  <Projects>
                    <Project name="Agent de Google Drive" counts={[0, 0, 0]} />
                    <Project name="AML CRM" active counts={[17, 3, 23]} />
                  </Projects>
                  <Tabs>
                    <TabLabel>Docs</TabLabel>
                    <TabLabel $active>Tasks</TabLabel>
                  </Tabs>
                  <Board>
                    {columns.map((c) => (
                      <Column key={c.name}>
                        <ColumnHead $tone={c.tone} $line={c.line} $dim={c.dim}>{c.name}</ColumnHead>
                        <Cards>{c.tasks.map((t, i) => <TaskItem key={i} task={t} />)}</Cards>
                      </Column>
                    ))}
                    <Scrollbar>
                      <svg width="7" height="5" viewBox="0 0 7 5"><path d="M3.500 0 7 5H0Z" fill="#858585" /></svg>
                      <Thumb />
                    </Scrollbar>
                  </Board>
                </Content>
                <SideNav>
                  <SideActive><ArchonMark w={21} h={24} id="nav-mark" /></SideActive>
                  <SideLink $mt={24}><BookOpen size={15} /></SideLink>
                  <SideLink $mt={28}><McpGlyph /></SideLink>
                  <SideLink $mt={30}><Settings size={14} /></SideLink>
                </SideNav>
                <Pointer width="13" height="17" viewBox="0 0 12 16"><path d="M1.500 1.500v11l2.700-2.200 1.800 4 2-.9-1.700-3.800 3.700-.4Z" fill="#2336e8" stroke="#c4c8f2" strokeWidth="1" /></Pointer>
                <Dock>
                  <DockChip $w={63} $h={25} $tone="#d0625a" $size={8.3} $gap={5}><WifiOff size={12} strokeWidth={2.4} />Offline</DockChip>
                  <AddChip $w={96} $h={33} $ml={11} $tone="#21a2c4"><Plus size={11} />Add Task</AddChip>
                  <ViewSwitch $w={150} $h={33} $ml={12} $tone="#7d8186" $gap={0}>
                    <ViewOption><Table size={12} />Table</ViewOption>
                    <ViewOption $active><LayoutGrid size={12} />Board</ViewOption>
                  </ViewSwitch>
                </Dock>
                <HelpOrb><ArchonMark w={17} h={20} id="orb-mark" dim /></HelpOrb>
              </Page>
              <Taskbar>
                {taskApps.map((a, i) => <TaskApp key={i} $dot={a.dot} $active={a.active}><AppIcon>{a.icon}</AppIcon></TaskApp>)}
                <Clock><div>3:01 PM</div><div>9/11/2025</div></Clock>
              </Taskbar>
            </Shared>
            <NameTag>
              Haroud Curiel Rodríguez
              <svg width="46" height="14" viewBox="0 0 46 14" stroke="#d8d8d8" strokeWidth="1"><path d="M8 7.500h10" stroke="#55525c" /><path d="M31 7.500h12M37 1.500v12" /></svg>
            </NameTag>
          </Stage>
        </Main>
      </Body>
    </Shell>
  );
}
